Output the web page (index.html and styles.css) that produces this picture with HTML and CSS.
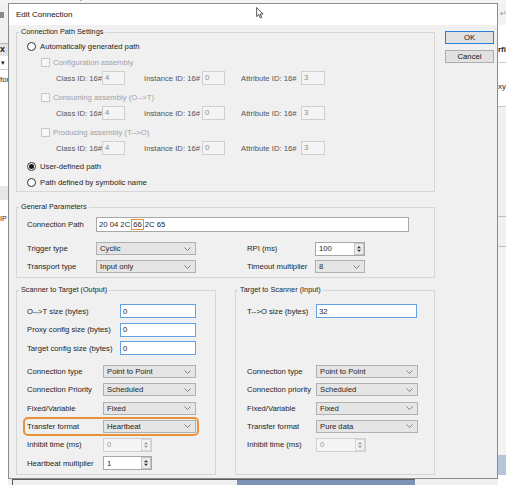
FILE: index.html
```html
<!DOCTYPE html>
<html lang="en">
  <head>
    <meta charset="UTF-8">
    <title>Edit Connection</title>
    <link rel="stylesheet" href="styles.css">
  </head>
  <body>
    <div class="screen">
      <div class="menubar">
        <span class="m1">Tools</span><span class="m2">Window</span><span class="m3">Help</span>
      </div>
      <div class="stage">
        <div class="side side-left">
          <div class="sl-tool"><i class="sl-icon"></i></div>
          <div class="sl-tab">x</div>
          <div class="sl-drop">&#9662;</div>
          <div class="sl-for">for</div>
          <div class="sl-white"></div>
          <div class="sl-band"></div>
          <div class="sl-ip">IP</div>
        </div>

        <div class="mid">
          <div class="dialog">
            <div class="titlebar">
              Edit Connection
              <svg class="cursor" viewBox="0 0 9 14"><path d="M0.6 0.6V11.2L3.1 8.8L4.9 12.8L6.5 12.1L4.7 8.2H8.1Z" fill="#fff" stroke="#222" stroke-width="0.9"/></svg>
            </div>
            <div class="dlg-body">
              <div class="main">
                <!-- connection path settings -->
                <fieldset class="group">
                  <legend>Connection Path Settings</legend>
                  <div class="inner g-path">
                    <div class="opt"><span class="radio"></span>Automatically generated path</div>
                    <div class="opt sub"><span class="check"></span>Configuration assembly</div>
                    <div class="ids">
                      <span class="lbl-c">Class ID: 16#</span><span class="box">4</span>
                      <span class="lbl-i">Instance ID: 16#</span><span class="box">0</span>
                      <span class="lbl-a">Attribute ID: 16#</span><span class="box w24">3</span>
                    </div>
                    <div class="opt sub gap3"><span class="check"></span>Consuming assembly (O--&gt;T)</div>
                    <div class="ids">
                      <span class="lbl-c">Class ID: 16#</span><span class="box">4</span>
                      <span class="lbl-i">Instance ID: 16#</span><span class="box">0</span>
                      <span class="lbl-a">Attribute ID: 16#</span><span class="box w24">3</span>
                    </div>
                    <div class="opt sub gap3"><span class="check"></span>Producing assembly (T--&gt;O)</div>
                    <div class="ids">
                      <span class="lbl-c">Class ID: 16#</span><span class="box">4</span>
                      <span class="lbl-i">Instance ID: 16#</span><span class="box">0</span>
                      <span class="lbl-a">Attribute ID: 16#</span><span class="box w24">3</span>
                    </div>
                    <div class="opt gap2"><span class="radio on"></span>User-defined path</div>
                    <div class="opt"><span class="radio"></span>Path defined by symbolic name</div>
                  </div>
                </fieldset>

                <!-- general parameters -->
                <fieldset class="group g-gen">
                  <legend>General Parameters</legend>
                  <div class="inner g-general">
                    <div class="prow">
                      <span class="lbl-g">Connection Path</span>
                      <span class="text cp">20 04 2C<span class="mark">66</span>2C 65</span>
                    </div>
                    <div class="prow trig">
                      <span class="lbl-g">Trigger type</span>
                      <span class="sel w100">Cyclic<svg class="chev" viewBox="0 0 7 4"><path d="M0.5 0.5L3.5 3.5L6.5 0.5" fill="none" stroke="#808080"/></svg></span>
                      <span class="lbl-g2">RPI (ms)</span>
                      <span class="spin w50">100<svg class="arrows" viewBox="0 0 10 12"><rect x="0.5" y="0.5" width="9" height="11" fill="#ececec" stroke="#c4c4c4"/><path d="M3 5.2h4L5 3z M3 6.8h4L5 9z" fill="#333"/></svg></span>
                    </div>
                    <div class="prow trans">
                      <span class="lbl-g">Transport type</span>
                      <span class="sel w100">Input only<svg class="chev" viewBox="0 0 7 4"><path d="M0.5 0.5L3.5 3.5L6.5 0.5" fill="none" stroke="#808080"/></svg></span>
                      <span class="lbl-g2">Timeout multiplier</span>
                      <span class="sel w50">8<svg class="chev" viewBox="0 0 7 4"><path d="M0.5 0.5L3.5 3.5L6.5 0.5" fill="none" stroke="#808080"/></svg></span>
                    </div>
                  </div>
                </fieldset>

                <div class="io">
                  <!-- scanner to target -->
                  <fieldset class="group half">
                    <legend>Scanner to Target (Output)</legend>
                    <div class="inner g-out">
                      <div class="stack-a">
                        <div class="frow"><span class="lbl-t">O--&gt;T size (bytes)</span><span class="text blue t76">0</span></div>
                        <div class="frow"><span class="lbl-t">Proxy config size (bytes)</span><span class="text blue t76">0</span></div>
                        <div class="frow"><span class="lbl-t">Target config size (bytes)</span><span class="text blue t76">0</span></div>
                      </div>
                      <div class="stack-b">
                        <div class="frow s"><span class="lbl-s">Connection type</span><span class="sel s93">Point to Point<svg class="chev" viewBox="0 0 7 4"><path d="M0.5 0.5L3.5 3.5L6.5 0.5" fill="none" stroke="#808080"/></svg></span></div>
                        <div class="frow s"><span class="lbl-s">Connection Priority</span><span class="sel s93">Scheduled<svg class="chev" viewBox="0 0 7 4"><path d="M0.5 0.5L3.5 3.5L6.5 0.5" fill="none" stroke="#808080"/></svg></span></div>
                        <div class="frow s"><span class="lbl-s">Fixed/Variable</span><span class="sel s93">Fixed<svg class="chev" viewBox="0 0 7 4"><path d="M0.5 0.5L3.5 3.5L6.5 0.5" fill="none" stroke="#808080"/></svg></span></div>
                        <div class="frow s hl"><span class="lbl-s">Transfer format</span><span class="sel s93">Heartbeat<svg class="chev" viewBox="0 0 7 4"><path d="M0.5 0.5L3.5 3.5L6.5 0.5" fill="none" stroke="#808080"/></svg></span></div>
                        <div class="frow s"><span class="lbl-s">Inhibit time (ms)</span><span class="spin off sp49">0<svg class="arrows" viewBox="0 0 10 12"><rect x="0.5" y="0.5" width="9" height="11" fill="#f2f2f2" stroke="#d6d6d6"/><path d="M3 5.2h4L5 3z M3 6.8h4L5 9z" fill="#9a9a9a"/></svg></span></div>
                        <div class="frow s"><span class="lbl-s">Heartbeat multiplier</span><span class="spin sp49">1<svg class="arrows" viewBox="0 0 10 12"><rect x="0.5" y="0.5" width="9" height="11" fill="#ececec" stroke="#c4c4c4"/><path d="M3 5.2h4L5 3z M3 6.8h4L5 9z" fill="#333"/></svg></span></div>
                      </div>
                    </div>
                  </fieldset>

                  <!-- target to scanner -->
                  <fieldset class="group half">
                    <legend>Target to Scanner (Input)</legend>
                    <div class="inner g-in">
                      <div class="stack-a">
                        <div class="frow"><span class="lbl">T--&gt;O size (bytes)</span><span class="text blue t101">32</span></div>
                        <div class="frow"></div>
                        <div class="frow"></div>
                      </div>
                      <div class="stack-b">
                        <div class="frow s"><span class="lbl">Connection type</span><span class="sel s102">Point to Point<svg class="chev" viewBox="0 0 7 4"><path d="M0.5 0.5L3.5 3.5L6.5 0.5" fill="none" stroke="#808080"/></svg></span></div>
                        <div class="frow s"><span class="lbl">Connection priority</span><span class="sel s102">Scheduled<svg class="chev" viewBox="0 0 7 4"><path d="M0.5 0.5L3.5 3.5L6.5 0.5" fill="none" stroke="#808080"/></svg></span></div>
                        <div class="frow s"><span class="lbl">Fixed/Variable</span><span class="sel s102">Fixed<svg class="chev" viewBox="0 0 7 4"><path d="M0.5 0.5L3.5 3.5L6.5 0.5" fill="none" stroke="#808080"/></svg></span></div>
                        <div class="frow s"><span class="lbl">Transfer format</span><span class="sel s102">Pure data<svg class="chev" viewBox="0 0 7 4"><path d="M0.5 0.5L3.5 3.5L6.5 0.5" fill="none" stroke="#808080"/></svg></span></div>
                        <div class="frow s"><span class="lbl">Inhibit time (ms)</span><span class="spin off sp50">0<svg class="arrows" viewBox="0 0 10 12"><rect x="0.5" y="0.5" width="9" height="11" fill="#f2f2f2" stroke="#d6d6d6"/><path d="M3 5.2h4L5 3z M3 6.8h4L5 9z" fill="#9a9a9a"/></svg></span></div>
                      </div>
                    </div>
                  </fieldset>
                </div>
              </div>

              <div class="buttons">
                <button class="btn default">OK</button>
                <button class="btn">Cancel</button>
              </div>
            </div>
          </div>
          <div class="under">
            <div class="under-box"><span class="under-blue"></span></div>
          </div>
        </div>

        <div class="side side-right">
          <div class="sr-top">&#8629;</div>
          <div class="sr-head">rfil</div>
          <div class="sr-row">xy</div>
          <div class="sr-gray"></div>
          <div class="sr-line"></div>
          <div class="sr-gray2"></div>
          <div class="sr-blue"></div>
        </div>
      </div>
    </div>
  </body>
</html>
```

FILE: styles.css
```css
* {
  box-sizing: border-box;
}
body {
  margin: 0;
  width: 506px;
  height: 485px;
  overflow: hidden;
  background: #fff;
  font-family: "Liberation Sans", Arial, sans-serif;
  font-size: 7.7px;
  color: #1e1e1e;
  white-space: nowrap;
}
.screen {
  display: flex;
  flex-direction: column;
  height: 485px;
}

/* app window behind the dialog */
.menubar {
  height: 3px;
  overflow: hidden;
  display: flex;
  background: #f4f4f4;
  font-size: 8px;
  line-height: 10px;
  color: #333;
}
.menubar span {
  margin-top: -8px;
}
.menubar .m1 {
  width: 27px;
  text-indent: -6px;
}
.menubar .m2 {
  width: 41px;
}
.stage {
  display: flex;
  height: 482px;
}
.side {
  width: 8px;
  flex-shrink: 0;
  overflow: hidden;
  display: flex;
  flex-direction: column;
  font-size: 8px;
}
.sl-tool {
  height: 40px;
  background: #f0f0f0;
}
.sl-icon {
  display: block;
  width: 4px;
  height: 6px;
  margin-top: 9px;
  background: #8a8a8a;
}
.sl-tab {
  height: 13px;
  background: #e3e3e3;
  border-top: 1px solid #b5b5b5;
  font-weight: bold;
  font-size: 9px;
  line-height: 11px;
}
.sl-drop {
  height: 14px;
  line-height: 14px;
  padding-left: 1px;
  font-size: 7px;
  border-bottom: 1px solid #d0d0d0;
}
.sl-for {
  height: 20px;
  padding-top: 5px;
}
.sl-white {
  height: 96px;
}
.sl-band {
  height: 14px;
  background: #e7e7e7;
}
.sl-ip {
  padding-top: 15px;
  font-size: 7px;
}
.sr-top {
  height: 22px;
  background: #f2f2f2;
  color: #999;
  line-height: 22px;
  padding-left: 2px;
}
.sr-head {
  height: 38px;
  padding-top: 20px;
  font-weight: bold;
  border-bottom: 1px solid #c8c8c8;
  line-height: 10px;
}
.sr-row {
  height: 44px;
  padding-top: 19px;
  border-bottom: 1px solid #c8c8c8;
}
.sr-gray {
  height: 110px;
  background: #f0f0f0;
  border-bottom: 1px solid #c0c0c0;
}
.sr-line {
  height: 30px;
  background: #f0f0f0;
  border-bottom: 1px solid #c0c0c0;
}
.sr-gray2 {
  height: 208px;
  background: #f3f3f3;
}
.sr-blue {
  height: 20px;
  background: #b5c5da;
}
.mid {
  width: 490px;
  flex-shrink: 0;
  display: flex;
  flex-direction: column;
}
.under {
  height: 6px;
  background: #f0f0f0;
  padding-left: 4px;
}
.under-box {
  width: 403px;
  height: 6px;
  border-top: 1px solid #5a5a5a;
  border-left: 1px solid #5a5a5a;
  display: flex;
  justify-content: flex-end;
}
.under-blue {
  width: 178px;
  background: #7d93b6;
}

/* dialog */
.dialog {
  height: 476px;
  border: 1px solid #8c8c8c;
  background: #f0f0f0;
  display: flex;
  flex-direction: column;
}
.titlebar {
  position: relative;
  height: 21px;
  flex-shrink: 0;
  background: #fff;
  padding-left: 7px;
  display: flex;
  align-items: center;
  font-size: 8px;
  color: #111;
}
.cursor {
  position: absolute;
  left: 247px;
  top: 3px;
  width: 8px;
  height: 12px;
}
.dlg-body {
  flex: 1;
  display: flex;
  gap: 10px;
  padding: 0 3px 0 7px;
}
.main {
  width: 419px;
  margin-top: 2px;
}
.buttons {
  width: 49px;
  margin-top: 6px;
  display: flex;
  flex-direction: column;
  gap: 6px;
}
.btn {
  height: 13px;
  padding: 0;
  border: 1px solid #adadad;
  background: #e1e1e1;
  font-family: inherit;
  font-size: 7.7px;
  color: #111;
}
.btn.default {
  border-color: #2a7fd4;
}

/* group boxes */
.group {
  margin: 0;
  padding: 0;
  min-width: 0;
  border: 1px solid #d6d6d6;
}
.group legend {
  font-size: 7.3px;
  line-height: 10px;
  padding: 0 2px;
  margin-left: 2px;
  color: #1e1e1e;
}
.g-gen {
  margin-top: 10px;
}
.inner.g-path {
  padding: 1px 0 1px 10px;
}
.opt {
  display: flex;
  align-items: center;
  height: 16px;
}
.opt.sub {
  padding-left: 14px;
  color: #a2a2a2;
}
.gap3 {
  margin-top: 3px;
}
.gap2 {
  margin-top: 2px;
}
.radio {
  width: 9px;
  height: 9px;
  margin-right: 4px;
  border: 1px solid #333;
  border-radius: 50%;
  background: #fff;
  display: flex;
  align-items: center;
  justify-content: center;
}
.radio.on::after {
  content: "";
  width: 5px;
  height: 5px;
  border-radius: 50%;
  background: #1a1a1a;
}
.check {
  width: 9px;
  height: 9px;
  margin-right: 3px;
  border: 1px solid #c8c8c8;
  background: #f7f7f7;
}
.ids {
  display: flex;
  align-items: center;
  height: 16px;
  padding-left: 29px;
  color: #555;
}
.ids span {
  flex-shrink: 0;
}
.lbl-c {
  width: 46px;
}
.lbl-i {
  width: 58px;
  margin-left: 19px;
}
.lbl-a {
  width: 60px;
  margin-left: 16px;
}
.box {
  width: 23px;
  height: 14px;
  line-height: 12px;
  padding-left: 2px;
  border: 1px solid #cfcfcf;
  background: #f4f4f4;
  color: #8a8a8a;
}
.box.w24 {
  width: 24px;
}

/* general parameters */
.inner.g-general {
  padding: 5px 0 3px 10px;
}
.prow {
  display: flex;
  align-items: center;
  height: 15px;
}
.prow.trig {
  margin-top: 9px;
}
.prow.trans {
  margin-top: 3px;
}
.lbl-g {
  width: 69px;
}
.lbl-g2 {
  width: 68px;
  margin-left: 51px;
}
.text {
  height: 14px;
  padding-left: 2px;
  border: 1px solid #a8a8a8;
  background: #fff;
  display: flex;
  align-items: center;
  white-space: pre;
}
.text.blue {
  border-color: #62a2e2;
}
.cp {
  width: 313px;
  height: 15px;
}
.mark {
  height: 11px;
  margin: 0 1px;
  padding: 0 1px;
  border: 1px solid #e8913a;
  display: flex;
  align-items: center;
}
.sel {
  height: 13px;
  padding: 0 4px 0 3px;
  border: 1px solid #b0b0b0;
  background: #e5e5e5;
  display: flex;
  align-items: center;
  justify-content: space-between;
}
.chev {
  width: 7px;
  height: 4px;
}
.w100 {
  width: 100px;
}
.w50 {
  width: 50px;
}
.spin {
  height: 14px;
  padding-left: 3px;
  border: 1px solid #a8a8a8;
  background: #fff;
  display: flex;
  align-items: center;
  justify-content: space-between;
}
.spin.off {
  border-color: #d0d0d0;
  background: #f5f5f5;
  color: #9a9a9a;
}
.arrows {
  width: 10px;
  height: 12px;
}

/* scanner / target */
.io {
  display: flex;
  justify-content: space-between;
  margin-top: 7px;
}
.group.half {
  width: 200px;
}
.g-out,
.g-in {
  padding: 9px 0 4px 10px;
}
.g-in {
  padding-left: 11px;
}
.stack-a {
  display: flex;
  flex-direction: column;
  gap: 4.5px;
}
.stack-b {
  display: flex;
  flex-direction: column;
  gap: 5.33px;
  margin-top: 10px;
}
.frow {
  display: flex;
  align-items: center;
  height: 14px;
}
.frow.s {
  height: 13px;
}
.frow.hl {
  width: max-content;
  margin-left: -1px;
  padding-left: 1px;
  outline: 2px solid #e8913a;
  outline-offset: 1px;
  border-radius: 2px;
}
.lbl-t {
  width: 93px;
}
.lbl-s {
  width: 76px;
}
.lbl {
  width: 69px;
}
.t76 {
  width: 76px;
}
.t101 {
  width: 101px;
}
.s93 {
  width: 93px;
}
.s102 {
  width: 102px;
}
.sp49 {
  width: 49px;
}
.sp50 {
  width: 50px;
}
```
